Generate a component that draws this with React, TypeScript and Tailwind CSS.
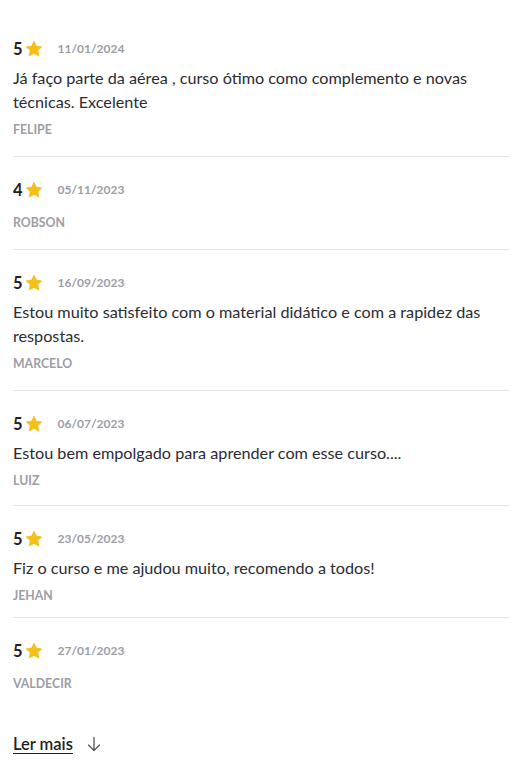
import React from "react";

const reviews = [
  { r: 5, d: "11/01/2024", t: "Já faço parte da aérea , curso ótimo como complemento e novas técnicas. Excelente", n: "FELIPE", pb: "pb-[18px]" },
  { r: 4, d: "05/11/2023", t: "", n: "ROBSON", pb: "pb-[18px]" },
  { r: 5, d: "16/09/2023", t: "Estou muito satisfeito com o material didático e com a rapidez das respostas.", n: "MARCELO", pb: "pb-[18px]" },
  { r: 5, d: "06/07/2023", t: "Estou bem empolgado para aprender com esse curso....", n: "LUIZ", pb: "pb-[16px]" },
  { r: 5, d: "23/05/2023", t: "Fiz o curso e me ajudou muito, recomendo a todos!", n: "JEHAN", pb: "pb-[13px]" },
  { r: 5, d: "27/01/2023", t: "", n: "VALDECIR", pb: "pb-[18px]" },
];

function Star() {
  return (
    <svg width="18" height="18" viewBox="0 0 24 24" className="ml-[2px]">
      <path
        d="M12 1.8l3.1 6.5 7.1.9-5.2 4.9 1.3 7.1L12 17.8l-6.3 3.4 1.3-7.1-5.2-4.9 7.1-.9z"
        fill="#f5bf1a"
        stroke="#f5bf1a"
        strokeWidth="1.2"
        strokeLinejoin="round"
      />
    </svg>
  );
}

export default function App() {
  return (
    <div className="bg-white w-[529px] min-h-[777px] pl-[13px] pr-[20px] pt-[16px]" style={{ fontFamily: "Lato, 'Noto Sans', sans-serif" }}>
      {reviews.map((v, i) => (
        <div
          key={i}
          className={`flex flex-col gap-2 pt-[22px] ${v.pb} ${i < reviews.length - 1 ? "border-b border-[#e4e4ea]" : ""}`}
        >
          <div className="flex items-center h-[20px] translate-y-[1px]">
            <span className="text-[16.5px] font-bold text-[#1f1f24] leading-[20px]">{v.r}</span>
            <Star />
            <span className="ml-[15px] text-[12px] font-bold text-[#9d9da6] leading-[20px]">{v.d}</span>
          </div>
          {v.t ? (
            <p className="text-[16.2px] leading-[24px] text-[#2b2b33]">{v.t}</p>
          ) : (
            <p></p>
          )}
          <div className="text-[12.3px] font-bold text-[#9d9da6] leading-[16px]">{v.n}</div>
        </div>
      ))}
      <div className="mt-[22px] flex items-center gap-[14px] h-[24px]">
        <span className="text-[16.5px] font-semibold text-[#1f1f24] underline underline-offset-[3px]">Ler mais</span>
        <svg width="14" height="16" viewBox="0 0 14 16" fill="none" stroke="#555" strokeWidth="1.3" strokeLinecap="round" strokeLinejoin="round">
          <path d="M7 1.5v13M1.5 9l5.5 5.5L12.5 9" />
        </svg>
      </div>
    </div>
  );
}
